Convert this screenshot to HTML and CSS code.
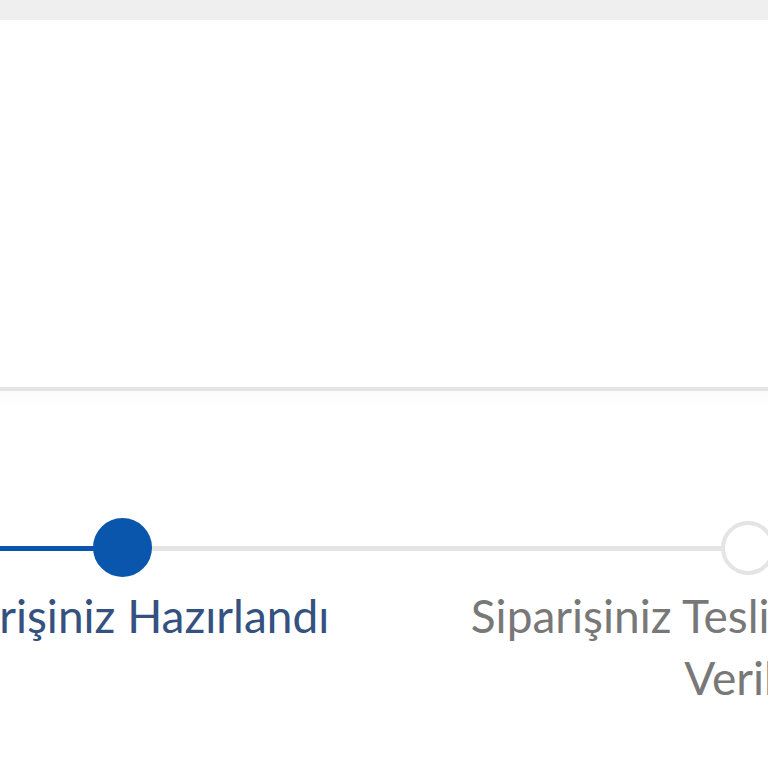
FILE: index.html
```html
<!DOCTYPE html>
<html lang="tr">
<head>
  <meta charset="UTF-8">
  <meta name="viewport" content="width=device-width, initial-scale=1.0">
  <title>Sipariş Takibi</title>
  <link rel="stylesheet" href="styles.css">
</head>
<body>
  <div class="topbar"></div>

  <div class="panel"></div>

  <div class="tracking">
    <ol class="steps">
      <li class="step done">
        <span class="dot"></span>
        <span class="label">Siparişiniz Alındı</span>
      </li>
      <li class="step done current">
        <span class="dot"></span>
        <span class="label">Siparişiniz Hazırlandı</span>
      </li>
      <li class="step">
        <span class="dot"></span>
        <span class="label">Siparişiniz Teslimat Birimine Verildi</span>
      </li>
    </ol>
  </div>
</body>
</html>
```

FILE: styles.css
```css
:root {
  --blue: #0b56ad;
  --blue-text: #34517f;
  --grey-line: #e4e4e4;
  --grey-text: #787878;
}

* {
  box-sizing: border-box;
  margin: 0;
  padding: 0;
}

html, body {
  overflow: hidden;
}

body {
  font-family: Lato, "Open Sans", sans-serif;
  background: #fff;
  height: 768px;
}

.topbar {
  height: 20px;
  background: #efefef;
  box-shadow: 0 1px 2px rgba(0, 0, 0, 0.03);
}

.panel {
  height: 371px;
  background: #fff;
  border-bottom: 4px solid var(--grey-line);
}

.tracking {
  padding-top: 127px;
  background: linear-gradient(#fbfbfb, #fff 16px);
}

.steps {
  list-style: none;
  display: grid;
  grid-template-columns: repeat(3, 626px);
  width: max-content;
  margin-left: -817px;
}

.step {
  position: relative;
  display: flex;
  flex-direction: column;
  align-items: center;
}

/* connector from the previous step to this one */
.step + .step::before {
  content: "";
  position: absolute;
  top: 28px;
  right: 50%;
  width: 100%;
  height: 5px;
  background: var(--grey-line);
  z-index: 0;
}

.step.done + .step.done::before {
  background: var(--blue);
}

.dot {
  position: relative;
  z-index: 1;
  width: 54px;
  height: 54px;
  margin: 3px 0 2px;
  border-radius: 50%;
  background: #fff;
  border: 4px solid var(--grey-line);
}

.step.done .dot {
  width: 59px;
  height: 59px;
  margin: 0;
  background: var(--blue);
  border-color: var(--blue);
}

.label {
  margin-top: 8px;
  max-width: 600px;
  font-size: 46px;
  line-height: 62px;
  text-align: center;
  color: var(--grey-text);
}

.step.done .label {
  color: var(--blue-text);
}
```
